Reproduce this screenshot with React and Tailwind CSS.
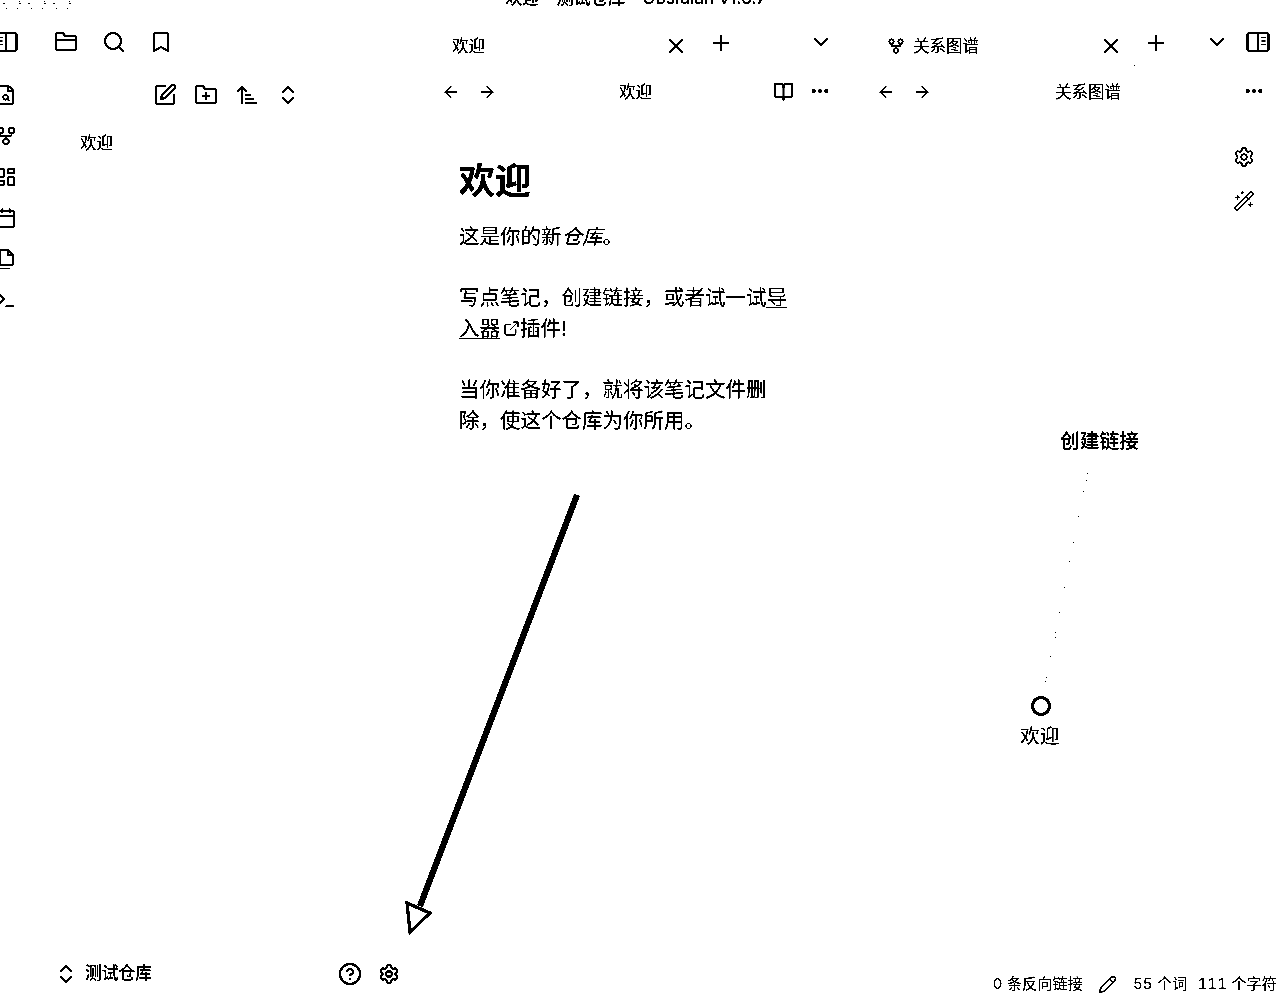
import React from "react";
import {
  FileSearch, GitFork, LayoutDashboard, Calendar, Terminal, FolderClosed, Search, Bookmark,
  SquarePen, FolderPlus, ArrowUpNarrowWide, ChevronsUpDown, CircleHelp, Settings, X, Plus, ChevronDown,
  ArrowLeft, ArrowRight, BookOpen, Ellipsis, WandSparkles, Pencil, ExternalLink,
} from "lucide-react";

const font = { fontFamily: '"Inter","Noto Sans CJK SC",sans-serif' };

function Toggle({ mirror }) {
  return (
    <svg width="24" height="24" viewBox="0 0 24 24" fill="none" stroke="black" strokeWidth="2" className={mirror ? "-scale-x-100" : ""}>
      <rect x="1.5" y="3" width="21" height="18" rx="2" />
      <path d="M12 3v18M4.5 7.5h4M4.5 11h4M4.5 14.5h4" strokeWidth="1.5" />
    </svg>
  );
}

function FileUnder({ size = 22 }) {
  return (
    <svg width={size} height={size} viewBox="0 0 22 22" fill="none" stroke="black" strokeWidth="2" strokeLinejoin="round">
      <path d="M5 15.5V3.5a1.5 1.5 0 0 1 1.5-1.5H13l5 5v8.5a1.5 1.5 0 0 1-1.5 1.5h-10A1.5 1.5 0 0 1 5 15.5Z" />
      <path d="M13 2v5h5" />
      <path d="M5 20.5h10" strokeWidth="1.5" />
    </svg>
  );
}

const dots = [
  [1087, 473], [1086, 480], [1083, 491], [1078, 516], [1073, 542], [1069, 561], [1064, 587], [1059, 612], [1055, 632], [1055, 637], [1050, 656], [1046, 677], [1045, 681],
];

export default function App() {
  return (
    <div className="relative w-[1280px] h-[998px] overflow-hidden bg-white text-black flex flex-col grayscale brightness-[0.8] contrast-[20]" style={font}>
      {/* title bar */}
      <div className="relative h-[24px] -mt-[14px] flex items-center justify-center shrink-0 text-[17.2px] font-medium">
        <div className="absolute left-[3px] top-[8px] flex gap-[7px]">
          {[0, 1, 2].map((i) => (
            <svg key={i} width="18" height="18" viewBox="0 0 18 18" fill="none" stroke="black" strokeWidth="1" strokeDasharray="1 5">
              <circle cx="9" cy="9" r="8" />
            </svg>
          ))}
        </div>
        <span className="-ml-[9px]">欢迎 - 测试仓库 - Obsidian v1.6.7</span>
      </div>

      <div className="flex flex-1 min-h-0">
        {/* ribbon */}
        <div className="w-[16px] shrink-0 flex flex-col">
          <div className="w-[32px] -ml-[16px] h-[68px] flex items-center justify-center pl-[12px] shrink-0">
            <div className="-mt-[4px]"><Toggle /></div>
          </div>
          <div className="w-[32px] -ml-[10px] flex flex-col items-center mt-[-4px]">
            {[FileSearch, GitFork, LayoutDashboard, Calendar, FileUnder, Terminal].map((I, i) => (
              <div key={i} className="h-[41px] flex items-center justify-center">
                <I size={22} strokeWidth={1.75} />
              </div>
            ))}
          </div>
        </div>

        {/* sidebar */}
        <div className="w-[414px] shrink-0 flex flex-col">
          <div className="h-[68px] flex items-center pl-[38px] shrink-0">
            <FolderClosed size={24} strokeWidth={2} className="-mt-[4px]" />
            <Search size={24} strokeWidth={2} className="ml-[24px] -mt-[4px]" />
            <Bookmark size={24} strokeWidth={2} className="ml-[23px] -mt-[4px]" />
          </div>
          <div className="h-[34px] flex items-center pl-[137px] shrink-0">
            <SquarePen size={24} strokeWidth={2} />
            <FolderPlus size={24} strokeWidth={2} className="ml-[17px]" />
            <ArrowUpNarrowWide size={24} strokeWidth={2} className="ml-[17px]" />
            <ChevronsUpDown size={24} strokeWidth={2} className="ml-[17px]" />
          </div>
          <div className="pl-[64px] mt-[19px] text-[16.5px] leading-[24px]">欢迎</div>
          <div className="mt-auto mb-[12px] h-[24px] flex items-center pl-[38px] shrink-0">
            <ChevronsUpDown size={24} strokeWidth={1.75} />
            <span className="ml-[7px] w-[67px] text-[16.75px] font-medium whitespace-nowrap">测试仓库</span>
            <CircleHelp size={24} strokeWidth={2} className="ml-[186px]" />
            <Settings size={22} strokeWidth={2} className="ml-[16px]" />
          </div>
        </div>

        {/* main pane */}
        <div className="w-[435px] shrink-0 flex flex-col">
          <div className="h-[68px] flex items-center pl-[22px] shrink-0 text-[16.5px]">
            <span className="w-[33px] whitespace-nowrap mt-[4px]">欢迎</span>
            <X size={24} strokeWidth={2} className="ml-[179px] mt-[4px]" />
            <Plus size={24} strokeWidth={2} className="ml-[21px] -mt-[2px]" />
            <ChevronDown size={24} strokeWidth={2} className="ml-[76px] -mt-[4px]" />
          </div>
          <div className="h-[30px] flex items-center pl-[11px] shrink-0 text-[16.5px]">
            <ArrowLeft size={20} strokeWidth={1.5} className="-mt-[2px]" />
            <ArrowRight size={20} strokeWidth={1.5} className="ml-[16px] -mt-[2px]" />
            <span className="ml-[122px] w-[33px] whitespace-nowrap -mt-[2px]">欢迎</span>
            <BookOpen size={21} strokeWidth={2} className="ml-[121px] -mt-[4px]" />
            <Ellipsis size={22} strokeWidth={2.5} className="ml-[15px] -mt-[4px]" />
          </div>
          <div className="pl-[29px] pt-[49px] w-[360px]">
            <h1 className="text-[36px] leading-[48px] font-bold mb-[17px]">欢迎</h1>
            <p className="text-[20.5px] leading-[30.6px] mb-[30.6px] w-[332px]">这是你的新<em>仓库</em>。</p>
            <p className="text-[20.5px] leading-[30.6px] mb-[30.6px] w-[332px]">
              写点笔记，创建链接，或者试一试<span className="underline decoration-1 underline-offset-2">导入器</span>
              <ExternalLink size={17} strokeWidth={1.75} className="inline ml-[3px] mb-[3px]" />插件!
            </p>
            <p className="text-[20.5px] leading-[30.6px] w-[332px]">当你准备好了，就将该笔记文件删除，使这个仓库为你所用。</p>
          </div>
        </div>

        {/* graph pane */}
        <div className="w-[415px] shrink-0 flex flex-col">
          <div className="h-[68px] flex items-center pl-[22px] shrink-0 text-[16.5px]">
            <GitFork size={18} strokeWidth={2} className="mt-[4px]" />
            <span className="ml-[8px] w-[66px] whitespace-nowrap mt-[4px]">关系图谱</span>
            <X size={24} strokeWidth={2} className="ml-[120px] mt-[4px]" />
            <Plus size={24} strokeWidth={2} className="ml-[21px] -mt-[2px]" />
            <ChevronDown size={24} strokeWidth={2} className="ml-[37px] -mt-[4px]" />
            <div className="ml-[17px] -mt-[4px]"><Toggle mirror /></div>
          </div>
          <div className="h-[30px] flex items-center pl-[11px] shrink-0 text-[16.5px]">
            <ArrowLeft size={20} strokeWidth={1.5} className="-mt-[2px]" />
            <ArrowRight size={20} strokeWidth={1.5} className="ml-[16px] -mt-[2px]" />
            <span className="ml-[123px] w-[66px] whitespace-nowrap -mt-[2px]">关系图谱</span>
            <Ellipsis size={22} strokeWidth={2.5} className="ml-[122px] -mt-[4px]" />
          </div>
          <div className="mt-[38px] pr-[25px] flex flex-col items-end gap-[22px]">
            <Settings size={22} strokeWidth={1.75} />
            <WandSparkles size={22} strokeWidth={1.5} />
          </div>
          <div className="mt-auto mb-[4px] pr-[3px] h-[20px] flex items-center justify-end text-[15px] whitespace-nowrap tracking-[0.2px] tabular-nums">
            <span>0 条反向链接</span>
            <Pencil size={19} strokeWidth={1.75} className="ml-[15px]" />
            <span className="ml-[16px]">55 个词</span>
            <span className="ml-[10px]">111 个字符</span>
          </div>
        </div>
      </div>

      {/* graph nodes on the canvas */}
      <span className="absolute left-[1060px] top-[427px] text-[19.8px] leading-[28px] font-medium whitespace-nowrap">创建链接</span>
      <span className="absolute left-[1020px] top-[722px] text-[19.8px] leading-[28px] whitespace-nowrap">欢迎</span>
      <div className="absolute left-[1031px] top-[696px] w-[20px] h-[20px] rounded-full border-[3px] border-black" />
      <svg className="absolute left-0 top-0 pointer-events-none" width="1280" height="998" fill="none">
        {dots.map(([x, y], i) => (
          <rect key={i} x={x} y={y} width="1" height="1" fill="black" />
        ))}
        <rect x="1134" y="65" width="1" height="1" fill="black" />
        {/* annotation arrow */}
        <path d="M577 495 L420 906" stroke="black" strokeWidth="6" />
        <path d="M407 903 L430 913 L410 932 Z" stroke="black" strokeWidth="3" fill="white" />
      </svg>
    </div>
  );
}
